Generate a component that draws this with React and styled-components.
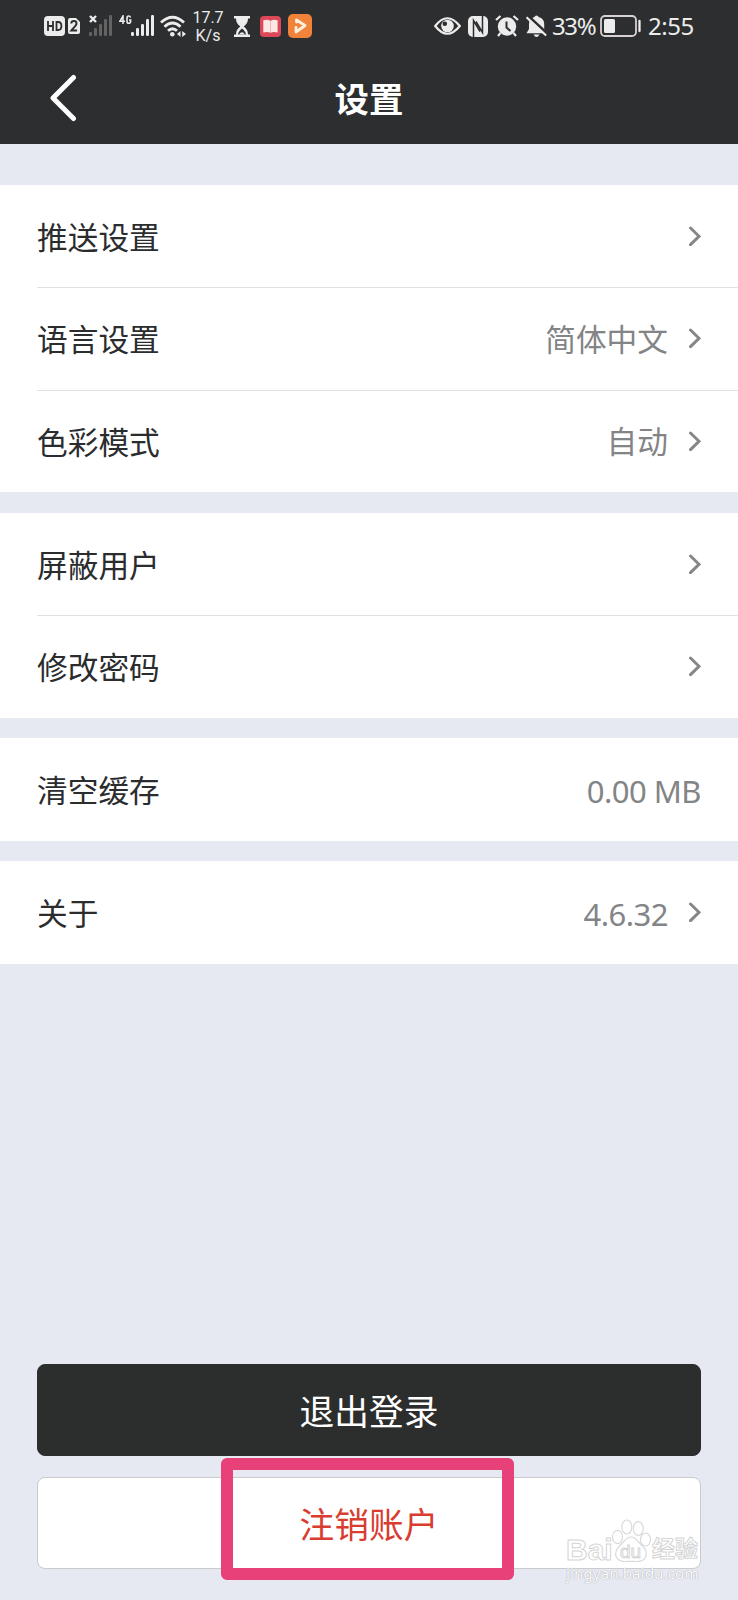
import React from "react";
import styled, { createGlobalStyle } from "styled-components";

const GlobalStyle = createGlobalStyle`
  * { box-sizing: border-box; }
  body { margin: 0; background: #e6e8f2; }
`;

const Screen = styled.div`
  position: relative;
  display: flex;
  flex-direction: column;
  width: 738px;
  height: 1600px;
  overflow: hidden;
  background: #e6e8f2;
  color: #2b2c2e;
  font-family: "Noto Sans", "Noto Sans CJK SC", sans-serif;
`;

const TopArea = styled.header`
  height: 143.5px;
  flex: none;
  background: #2d2e2f;
  color: #fff;
`;

const StatusBar = styled.div`
  display: flex;
  justify-content: space-between;
  height: 52px;
  padding: 0 44px;
  color: #ececec;
`;

const StatusGroup = styled.div`
  display: flex;
  align-items: center;
`;

const StatusIcon = styled.svg`
  flex: none;
  display: block;
  margin-left: ${(p) => p.$gap || 0}px;
`;

const Speed = styled.div`
  width: 32px;
  margin-left: 5px;
  padding-top: 1px;
  font: 16px/18px Roboto, sans-serif;
  text-align: center;
  white-space: nowrap;
`;

const StatusText = styled.span`
  width: ${(p) => p.$width}px;
  margin-left: ${(p) => p.$gap}px;
  font-size: 24px;
  line-height: 30px;
  letter-spacing: ${(p) => p.$spacing}px;
  white-space: nowrap;
`;

const TitleBar = styled.div`
  display: grid;
  grid-template-columns: 100px 1fr 100px;
  align-items: center;
  height: 91px;
`;

const BackButton = styled.button`
  display: flex;
  padding: 0 0 0 46px;
  border: 0;
  background: none;
  color: #fff;
`;

const Title = styled.h1`
  margin: 0 0 2px;
  font: 700 34.4px/46px "Noto Sans CJK SC", sans-serif;
  text-align: center;
`;

const Settings = styled.main`
  display: flex;
  flex-direction: column;
  gap: 20.5px;
  padding-top: 41.2px;
`;

const Group = styled.section`
  background: #fff;
`;

const Row = styled.div`
  display: flex;
  align-items: center;
  height: 102.5px;
  margin-left: 37px;
  padding-right: 37px;
  & + & { box-shadow: inset 0 1px 0 #e0e1e3; }
`;

const Label = styled.span`
  flex: 1;
  font: 30.7px/44px "Noto Sans CJK SC", sans-serif;
`;

const Value = styled.span`
  padding-top: ${(p) => (p.$latin ? 3 : 1)}px;
  color: #838486;
  font-size: ${(p) => (p.$latin ? 31 : 30.7)}px;
  line-height: 44px;
  letter-spacing: ${(p) => (p.$latin ? -0.5 : 0)}px;
`;

const Chevron = styled.svg`
  display: block;
  margin-left: 20px;
`;

const Actions = styled.footer`
  display: flex;
  flex-direction: column;
  gap: 21px;
  margin-top: auto;
  padding: 0 37px 31px;
`;

const ActionButton = styled.button`
  height: 92px;
  padding: 0;
  border: 1px solid ${(p) => (p.$danger ? "#c9cbcc" : "#2c2d2e")};
  border-radius: 8px;
  background: ${(p) => (p.$danger ? "#fff" : "#2c2e2e")};
  color: ${(p) => (p.$danger ? "#d93c30" : "#fff")};
  font: 34.7px/50px "Noto Sans CJK SC", sans-serif;
`;

const Highlight = styled.div`
  position: absolute;
  left: 220.5px;
  top: 1458px;
  width: 293px;
  height: 122px;
  border: 12px solid #e84079;
  border-radius: 6px;
`;

const Watermark = styled.div`
  position: absolute;
  left: 566px;
  top: 1517px;
  width: 136px;
`;

const Brand = styled.div`
  display: flex;
  align-items: flex-end;
  height: 46px;
  color: #fff;
  -webkit-text-stroke: 1px #d4d5d6;
`;

const BrandText = styled.span`
  width: ${(p) => p.$width}px;
  font: 700 ${(p) => p.$size}px/27px "Liberation Sans", "Noto Sans CJK SC", sans-serif;
  white-space: nowrap;
`;

const SiteName = styled.div`
  padding-top: 1px;
  color: #fbfbfc;
  font-size: 15.3px;
  line-height: 19px;
  text-shadow: 0 0 1px #9d9fa3, 0 0 1px #c4c5c9;
  white-space: nowrap;
`;

const HdIcon = () => (
  <StatusIcon width="37" height="20" viewBox="0 0 37 20">
    <rect width="21" height="20" rx="4" fill="#ececec" />
    <path d="M4 5v10M9 5v10M4 10h5M12.5 6v8h1.7c2.2 0 3.2-1.5 3.2-4s-1-4-3.2-4z" fill="none" stroke="#2d2e2f" strokeWidth="1.8" />
    <path d="M26 2h6l4 4v10q0 2-2 2h-8q-2 0-2-2V4q0-2 2-2z" fill="#ececec" />
    <path d="M27.3 7.5c0-3.2 5.2-3.2 5.2 0 0 2.1-2.8 4-5.2 7h5.8" fill="none" stroke="#2d2e2f" strokeWidth="2" />
  </StatusIcon>
);

const bars = [[0, 17, 4], [5, 13, 8], [10, 9, 12], [15, 4, 17], [20, 0, 21]];

const NoSignalIcon = () => (
  <StatusIcon $gap={8} width="24" height="22" viewBox="0 0 24 22">
    {bars.map(([x, y, h]) => (
      <rect key={x} x={x} y={y} width="3" height={h} rx="1.2" fill="#636363" />
    ))}
    <path d="M1 1l6 6M7 1L1 7" stroke="#ececec" strokeWidth="2.4" />
  </StatusIcon>
);

const SignalIcon = () => (
  <StatusIcon $gap={6} width="35" height="22" viewBox="0 0 35 22">
    {bars.map(([x, y, h]) => (
      <rect key={x} x={x + 12} y={y} width="3" height={h} rx="1.2" fill="#ececec" />
    ))}
    <path d="M4 9V1L1 6.2h5M11.5 2.5Q11 1 9.7 1 8 1 8 3.2v3Q8 8.3 9.8 8.3t1.8-2V5H10" fill="none" stroke="#ececec" strokeWidth="1.6" />
  </StatusIcon>
);

const WifiIcon = () => (
  <StatusIcon $gap={6} width="27" height="22" viewBox="0 0 27 22">
    <g fill="none" stroke="#ececec" strokeWidth="2.8">
      <path d="M1 7.5q11.5-10.5 23 0" />
      <path d="M4.5 11.8q8-7.5 16 0" />
      <path d="M8 15.8q4.5-4.2 9 0" />
    </g>
    <circle cx="12.3" cy="19.3" r="2.3" fill="#ececec" />
    <path d="M17 19l3.5-3v6zM26 19l-3.8-3v6z" fill="#ececec" />
  </StatusIcon>
);

const HourglassIcon = () => (
  <StatusIcon $gap={10} width="16" height="21" viewBox="0 0 16 21">
    <path d="M0 0h16v2.4h-2c0 4-1.8 6.2-4.3 8 2.5 1.9 4.3 4 4.3 8h2V21H0v-2.6h2c0-4 1.8-6.1 4.3-8C3.8 8.6 2 6.4 2 2.4H0z" fill="#ececec" />
    <path d="M4 18.500c.6-3 2-4.500 4-6 2 1.500 3.400 3 4 6z" fill="#2d2e2f" />
    <path d="M5 18.500q3-4.500 6 0z" fill="#ececec" />
  </StatusIcon>
);

const BookIcon = () => (
  <StatusIcon $gap={10} width="21" height="21" viewBox="0 0 21 21">
    <rect width="21" height="21" rx="4" fill="#dc4858" />
    <path d="M3.3 4.3q4-1.3 7 .4v12q-3-1.4-7-.2zM17.6 4.3q-4-1.3-7 .4v12q3-1.4 7-.2z" fill="#fbe8e5" />
  </StatusIcon>
);

const PlayIcon = () => (
  <StatusIcon $gap={7} width="24" height="24" viewBox="0 0 24 24">
    <rect width="24" height="24" rx="5" fill="#f08339" />
    <path d="M8.500 8V6l8.500 5.500-9 6.500v-4.500" fill="none" stroke="#fff0df" strokeWidth="2.800" strokeLinejoin="round" strokeLinecap="round" />
  </StatusIcon>
);

const EyeIcon = () => (
  <StatusIcon width="27" height="18" viewBox="0 0 27 18">
    <path d="M1.2 9q12-15.5 24.6 0-12.6 15.5-24.6 0z" fill="none" stroke="#ececec" strokeWidth="2.2" />
    <circle cx="13.5" cy="9" r="6.3" fill="#ececec" />
    <circle cx="10.8" cy="6.8" r="2.3" fill="#2d2e2f" />
  </StatusIcon>
);

const NfcIcon = () => (
  <StatusIcon $gap={7} width="20" height="21" viewBox="0 0 20 21">
    <rect width="20" height="21" rx="5" fill="#ececec" />
    <path d="M5.5 21V4.5l6.500 11M14.500 0v16.500L8 5.500" fill="none" stroke="#2d2e2f" strokeWidth="1.500" />
  </StatusIcon>
);

const AlarmIcon = () => (
  <StatusIcon $gap={7} width="24" height="22" viewBox="0 0 24 22">
    <circle cx="12" cy="11.5" r="9.2" fill="#ececec" />
    <path d="M1 5l4.5-4M23 5l-4.5-4M5.5 18L3 21M18.5 18l2.5 3" stroke="#ececec" strokeWidth="2.2" />
    <path d="M11.5 6.5v6l4 3.5" fill="none" stroke="#2d2e2f" strokeWidth="2" />
  </StatusIcon>
);

const MutedBellIcon = () => (
  <StatusIcon $gap={7} width="21" height="23" viewBox="0 0 21 23">
    <path d="M10.5.5q1.8 0 2.1 1.5 5.6 1.6 5.6 7v5.2l2.5 4H.5L3 14V9q0-5.4 5.5-7Q8.7.5 10.5.5zM7.5 19.5h6q-3 5-6 0z" fill="#ececec" />
    <path d="M2 .8l20 18.5" stroke="#2d2e2f" strokeWidth="2.8" />
    <path d="M.5 2.2l19.6 18.3" stroke="#ececec" strokeWidth="2.2" />
  </StatusIcon>
);

const BatteryIcon = () => (
  <StatusIcon $gap={4} width="42" height="22" viewBox="0 0 42 22">
    <rect x="1" y="1" width="35" height="20" rx="4" fill="none" stroke="#d8d1d6" strokeWidth="1.8" />
    <rect x="4" y="4" width="11" height="14" rx="1.5" fill="#ececec" />
    <path d="M39.5 6v10" stroke="#ececec" strokeWidth="2.3" strokeLinecap="round" />
  </StatusIcon>
);

const Paw = () => (
  <svg width="41" height="45" viewBox="0 0 41 45">
    <g fill="#fff" stroke="#d9dadb" strokeWidth="1.2">
      <ellipse cx="6.5" cy="19" rx="5" ry="6.7" />
      <ellipse cx="15.8" cy="9" rx="5" ry="7" />
      <ellipse cx="27.3" cy="10.5" rx="5" ry="6.8" />
      <ellipse cx="34.5" cy="21.5" rx="5" ry="6.5" />
      <path d="M20 19c5 0 7 5 11 8.500 5 4.500 5.500 8 3.500 12-2.500 5-8 4-14.500 3.800-6.500.2-12 1.200-14.500-3.800-2-4-1-7.500 3.500-12C13 24 15 19 20 19z" />
    </g>
    <text x="9" y="40" fill="#fff" stroke="#d4d5d6" strokeWidth="1" fontFamily="Liberation Sans, sans-serif" fontSize="19" fontWeight="400">du</text>
  </svg>
);

const groups = [
  [
    { label: "推送设置", arrow: true },
    { label: "语言设置", value: "简体中文", arrow: true },
    { label: "色彩模式", value: "自动", arrow: true },
  ],
  [
    { label: "屏蔽用户", arrow: true },
    { label: "修改密码", arrow: true },
  ],
  [{ label: "清空缓存", value: "0.00 MB", latin: true }],
  [{ label: "关于", value: "4.6.32", latin: true, arrow: true }],
];

export default function App() {
  return (
    <Screen>
      <GlobalStyle />
      <TopArea>
        <StatusBar>
          <StatusGroup>
            <HdIcon />
            <NoSignalIcon />
            <SignalIcon />
            <WifiIcon />
            <Speed>17.7<br />K/s</Speed>
            <HourglassIcon />
            <BookIcon />
            <PlayIcon />
          </StatusGroup>
          <StatusGroup>
            <EyeIcon />
            <NfcIcon />
            <AlarmIcon />
            <MutedBellIcon />
            <StatusText $width={44} $gap={5} $spacing={-1.4}>33%</StatusText>
            <BatteryIcon />
            <StatusText $width={46} $gap={6} $spacing={-0.5}>2:55</StatusText>
          </StatusGroup>
        </StatusBar>
        <TitleBar>
          <BackButton aria-label="返回">
            <svg width="32" height="48" viewBox="0 0 32 48" fill="none" stroke="currentColor" strokeWidth="5" strokeLinecap="round" strokeLinejoin="round">
              <path d="M27.5 3.5L7 24l20.5 20.5" />
            </svg>
          </BackButton>
          <Title>设置</Title>
        </TitleBar>
      </TopArea>
      <Settings>
        {groups.map((rows, i) => (
          <Group key={i}>
            {rows.map((row) => (
              <Row key={row.label}>
                <Label>{row.label}</Label>
                {row.value && <Value $latin={row.latin}>{row.value}</Value>}
                {row.arrow && (
                  <Chevron width="13" height="20" viewBox="0 0 13 20" fill="none" stroke="#858688" strokeWidth="3" strokeLinecap="round">
                    <path d="M2.5 2L11 10.3 2.5 18.6" />
                  </Chevron>
                )}
              </Row>
            ))}
          </Group>
        ))}
      </Settings>
      <Actions>
        <ActionButton>退出登录</ActionButton>
        <ActionButton $danger>注销账户</ActionButton>
      </Actions>
      <Watermark>
        <Brand>
          <BrandText $width={45} $size={30}>Bai</BrandText>
          <Paw />
          <BrandText $width={46} $size={23}>经验</BrandText>
        </Brand>
        <SiteName>jingyan.baidu.com</SiteName>
      </Watermark>
      <Highlight />
    </Screen>
  );
}
